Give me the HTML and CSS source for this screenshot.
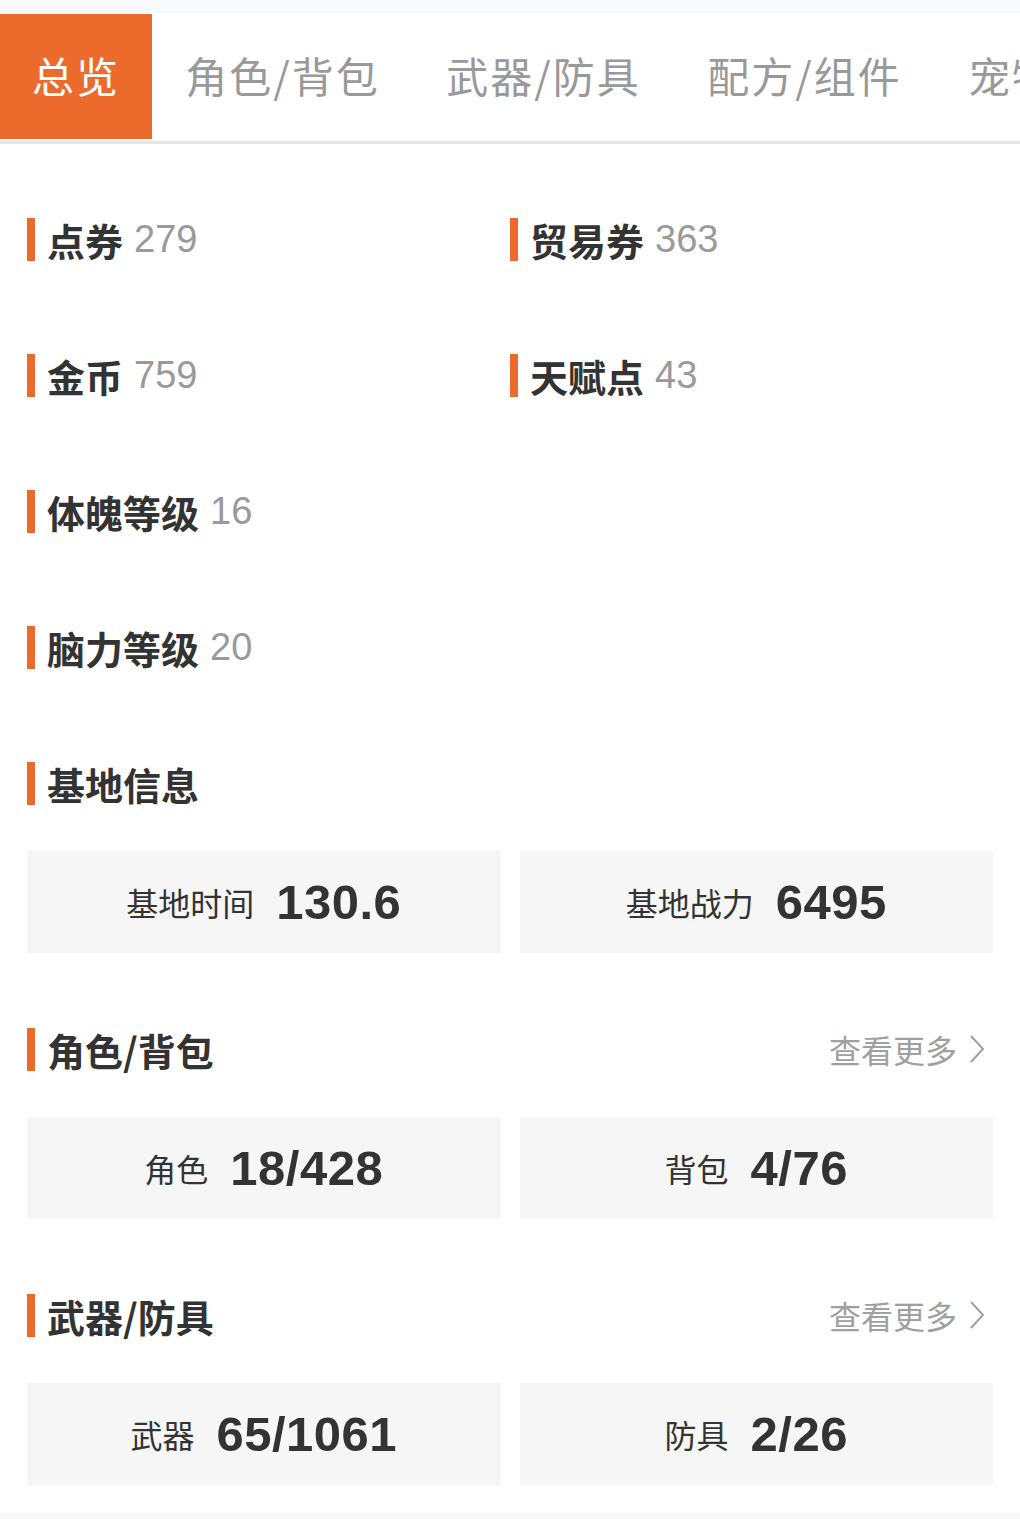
FILE: index.html
```html
<!DOCTYPE html>
<html lang="zh-CN">
  <head>
    <meta charset="UTF-8" />
    <meta name="viewport" content="width=device-width, initial-scale=1.0" />
    <title>总览</title>
    <link rel="stylesheet" href="styles.css">
  </head>
  <body>
    <div class="top-strip"></div>
    <nav class="tabs">
      <div class="tab tab-active">总览</div>
      <div class="tab">角色/背包</div>
      <div class="tab">武器/防具</div>
      <div class="tab">配方/组件</div>
      <div class="tab">宠物/坐骑</div>
    </nav>

    <main class="content">
      <div class="stat-grid">
        <div class="row"><span class="bar"></span><span class="label">点券</span><span class="value">279</span></div>
        <div class="row"><span class="bar"></span><span class="label">贸易券</span><span class="value">363</span></div>
        <div class="row"><span class="bar"></span><span class="label">金币</span><span class="value">759</span></div>
        <div class="row"><span class="bar"></span><span class="label">天赋点</span><span class="value">43</span></div>
        <div class="row row-full"><span class="bar"></span><span class="label">体魄等级</span><span class="value">16</span></div>
        <div class="row row-full"><span class="bar"></span><span class="label">脑力等级</span><span class="value">20</span></div>
      </div>

      <section class="section">
        <div class="row"><span class="bar"></span><span class="label">基地信息</span></div>
        <div class="cards">
          <div class="card"><span class="card-label">基地时间</span><span class="card-value">130.6</span></div>
          <div class="card"><span class="card-label">基地战力</span><span class="card-value">6495</span></div>
        </div>
      </section>

      <section class="section">
        <div class="row">
          <span class="bar"></span><span class="label">角色/背包</span>
          <a class="more">查看更多<svg class="chevron" width="18" height="32" viewBox="0 0 18 32"><path d="M3 3 L15 16 L3 29" fill="none" stroke="#a0a0a0" stroke-width="2"/></svg></a>
        </div>
        <div class="cards">
          <div class="card"><span class="card-label">角色</span><span class="card-value">18/428</span></div>
          <div class="card"><span class="card-label">背包</span><span class="card-value">4/76</span></div>
        </div>
      </section>

      <section class="section">
        <div class="row">
          <span class="bar"></span><span class="label">武器/防具</span>
          <a class="more">查看更多<svg class="chevron" width="18" height="32" viewBox="0 0 18 32"><path d="M3 3 L15 16 L3 29" fill="none" stroke="#a0a0a0" stroke-width="2"/></svg></a>
        </div>
        <div class="cards">
          <div class="card"><span class="card-label">武器</span><span class="card-value">65/1061</span></div>
          <div class="card"><span class="card-label">防具</span><span class="card-value">2/26</span></div>
        </div>
      </section>
    </main>
    <div class="bottom-strip"></div>
  </body>
</html>
```

FILE: styles.css
```css
body {
  margin: 0;
  width: 1020px;
  background-color: #fff;
  font-family: "Liberation Sans", "Noto Sans CJK SC", sans-serif;
  color: #333;
  overflow: hidden;
}

.top-strip {
  height: 13px;
  background-color: #f7f9fc;
}

.tabs {
  display: flex;
  height: 128px;
  border-bottom: 3px solid #e6e6e6;
  overflow: hidden;
  white-space: nowrap;
}

.tab {
  flex: 0 0 261px;
  display: flex;
  align-items: center;
  justify-content: center;
  padding-bottom: 5px;
  box-sizing: border-box;
  font-family: "Noto Sans CJK SC", sans-serif;
  font-size: 42px;
  letter-spacing: 2px;
  color: #999;
}

.tab-active {
  flex-basis: 152px;
  margin: 1px 0 2px;
  background-color: #ed6a2d;
  color: #fff;
}

.content {
  padding: 27px 27px 0;
}

.stat-grid {
  display: grid;
  grid-template-columns: 483px 483px;
}

.row {
  display: flex;
  align-items: center;
  height: 136px;
}

.row-full {
  grid-column: 1 / 3;
}

.bar {
  width: 8px;
  height: 43px;
  margin-right: 12px;
  background-color: #ed6a2d;
}

.label {
  font-family: "Noto Sans CJK SC", sans-serif;
  font-size: 38px;
  font-weight: 700;
  color: #333;
}

.value {
  margin-left: 11px;
  font-size: 38px;
  color: #9a9a9a;
}

.more {
  margin-left: auto;
  margin-right: 7px;
  display: flex;
  align-items: center;
  font-family: "Noto Sans CJK SC", sans-serif;
  font-size: 32px;
  color: #a0a0a0;
}

.chevron {
  margin-left: 11px;
}

.section {
  margin-bottom: 28px;
}

.cards {
  display: grid;
  grid-template-columns: 1fr 1fr;
  column-gap: 19px;
}

.card {
  height: 102px;
  display: flex;
  align-items: center;
  justify-content: center;
  gap: 22px;
  background-color: #f6f6f6;
}

.card-label {
  font-family: "Noto Sans CJK SC", sans-serif;
  font-size: 32px;
  color: #333;
}

.card-value {
  font-size: 49px;
  font-weight: 700;
  letter-spacing: 0.5px;
  color: #333;
}

.bottom-strip {
  height: 6px;
  background-color: #f7f9fc;
}
```
